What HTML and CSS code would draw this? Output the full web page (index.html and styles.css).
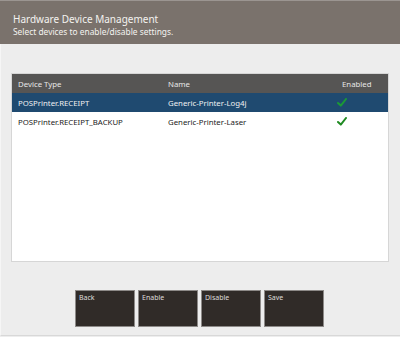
FILE: index.html
```html
<!DOCTYPE html>
<html>
    <head>
        <title>Hardware Device Management</title>
        <link rel="stylesheet" href="styles.css">
    </head>
    <body>
        <div class='header'>
            <div class='title'>Hardware Device Management</div>
            <div class='subtitle'>Select devices to enable/disable settings.</div>
        </div>
        <div class='content'>
            <div class='grid'>
                <div class='row head'>
                    <div class='colType'>Device Type</div>
                    <div class='colName'>Name</div>
                    <div class='colEnabled'>Enabled</div>
                </div>
                <div class='row selected'>
                    <div class='colType'>POSPrinter.RECEIPT</div>
                    <div class='colName'>Generic-Printer-Log4j</div>
                    <div class='colEnabled'>
                        <svg class='check' width='10' height='9' viewBox='0 0 10 9'><path d='M1 5 L3.8 7.6 L9 1' fill='none' stroke-width='2' stroke-linecap='round' stroke-linejoin='round'/></svg>
                    </div>
                </div>
                <div class='row'>
                    <div class='colType'>POSPrinter.RECEIPT_BACKUP</div>
                    <div class='colName'>Generic-Printer-Laser</div>
                    <div class='colEnabled'>
                        <svg class='check' width='10' height='9' viewBox='0 0 10 9'><path d='M1 5 L3.8 7.6 L9 1' fill='none' stroke-width='2' stroke-linecap='round' stroke-linejoin='round'/></svg>
                    </div>
                </div>
            </div>
            <div class='buttons'>
                <div class='btn'>Back</div>
                <div class='btn'>Enable</div>
                <div class='btn'>Disable</div>
                <div class='btn'>Save</div>
            </div>
        </div>
    </body>
</html>
```

FILE: styles.css
```css
body
{
    margin: 0;
    width: 400px;
    height: 337px;
    background-color: #ededed;
    font-family: "Noto Sans", "Open Sans", sans-serif;
    overflow: hidden;
}

.header
{
    height: 44px;
    border-top: 1px solid #9b9591;
    background-color: #7a726c;
    color: #f4f2f0;
    padding-left: 13px;
    box-sizing: border-box;
}

.title
{
    font-size: 10px;
    padding-top: 12px;
    line-height: 13px;
}

.subtitle
{
    font-size: 8.4px;
    line-height: 11px;
}

.content
{
    height: 292px;
    border-bottom: 1px solid #d8d8d8;
    border-left: 1px solid #f6f6f6;
    box-sizing: border-box;
    padding: 29px 11px 0 10px;
}

.grid
{
    height: 189px;
    background-color: #fff;
    border: 1px solid #d6d6d6;
    box-sizing: border-box;
    font-size: 7.8px;
}

.row
{
    display: flex;
    height: 19px;
    align-items: center;
    color: #222;
}

.row.head
{
    background-color: #565554;
    color: #e6e6e6;
}

.row.selected
{
    background-color: #1f4a70;
    color: #f0f0f0;
}

.colType
{
    width: 150px;
    padding-left: 6px;
}

.colName
{
    width: 166px;
}

.colEnabled
{
    padding-left: 3px;
    display: flex;
    align-items: center;
}

.row .colEnabled .check
{
    stroke: #1f8a22;
}

.selected .colEnabled .check
{
    stroke: #1b9a35;
}

.head .colEnabled
{
    padding-left: 8px;
}

.buttons
{
    display: flex;
    justify-content: center;
    gap: 3px;
    margin-top: 28px;
    padding-right: 1px;
}

.btn
{
    width: 60px;
    height: 37px;
    box-sizing: border-box;
    background-color: #302b28;
    border: 1px solid #8d8a88;
    color: #dedcda;
    font-size: 7px;
    padding: 2px 0 0 3px;
}
```
